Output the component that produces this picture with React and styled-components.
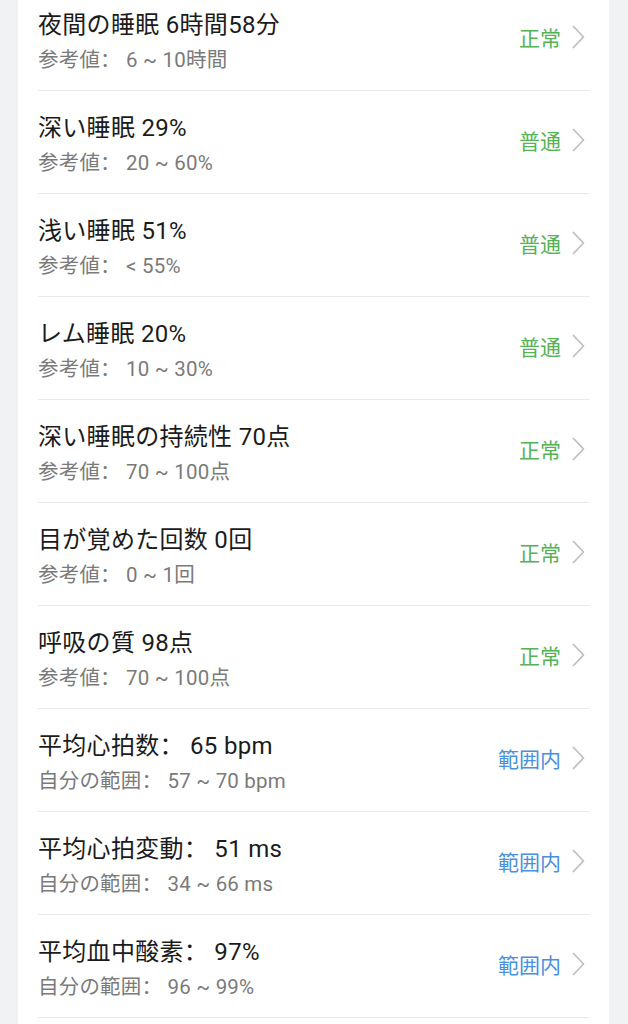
import React from "react";
import styled, { createGlobalStyle } from "styled-components";

const Global = createGlobalStyle`
  html, body { margin: 0; padding: 0; background: #f1f2f4; }
  body { font-family: Roboto, "Noto Sans CJK SC", "Noto Sans", sans-serif; overflow: hidden; }
`;

const Card = styled.div`
  margin: -12px 19px 0 18px;
  background: #ffffff;
  padding: 0 19px 24px 20px;
`;

const Row = styled.div`
  display: flex;
  align-items: center;
  height: 102px;
  border-bottom: 1px solid #ebebeb;
`;

const Texts = styled.div`
  flex: 1;
  display: flex;
  flex-direction: column;
  padding-top: 3px;
`;

const Title = styled.div`
  font-size: 24px;
  line-height: 36px;
  letter-spacing: 0.3px;
  color: #1b1b1b;
`;

const Sub = styled.div`
  margin-top: 2px;
  font-size: 20.5px;
  line-height: 30px;
  letter-spacing: 0.2px;
  color: #7a7a7a;
`;

const Status = styled.div`
  display: flex;
  align-items: center;
  gap: 11px;
  font-size: 21px;
  color: ${(p) => (p.$tone === "blue" ? "#4a8fe0" : "#55b255")};
  padding-right: 5px;
  padding-bottom: 4px;
`;

const Chevron = () => (
  <svg width="13" height="24" viewBox="0 0 13 24" fill="none">
    <polyline points="1.5,1.5 11.5,12 1.5,22.5" stroke="#bfbfbf" strokeWidth="1.8" strokeLinecap="round" strokeLinejoin="round" />
  </svg>
);

const items = [
  ["夜間の睡眠 6時間58分", "参考値： 6 ~ 10時間", "正常", "green"],
  ["深い睡眠 29%", "参考値： 20 ~ 60%", "普通", "green"],
  ["浅い睡眠 51%", "参考値： < 55%", "普通", "green"],
  ["レム睡眠 20%", "参考値： 10 ~ 30%", "普通", "green"],
  ["深い睡眠の持続性 70点", "参考値： 70 ~ 100点", "正常", "green"],
  ["目が覚めた回数 0回", "参考値： 0 ~ 1回", "正常", "green"],
  ["呼吸の質 98点", "参考値： 70 ~ 100点", "正常", "green"],
  ["平均心拍数： 65 bpm", "自分の範囲： 57 ~ 70 bpm", "範囲内", "blue"],
  ["平均心拍変動： 51 ms", "自分の範囲： 34 ~ 66 ms", "範囲内", "blue"],
  ["平均血中酸素： 97%", "自分の範囲： 96 ~ 99%", "範囲内", "blue"],
];

export default function App() {
  return (
    <>
      <Global />
      <Card>
        {items.map(([t, s, st, tone]) => (
          <Row key={t}>
            <Texts>
              <Title>{t}</Title>
              <Sub>{s}</Sub>
            </Texts>
            <Status $tone={tone}>
              {st}
              <Chevron />
            </Status>
          </Row>
        ))}
      </Card>
    </>
  );
}
